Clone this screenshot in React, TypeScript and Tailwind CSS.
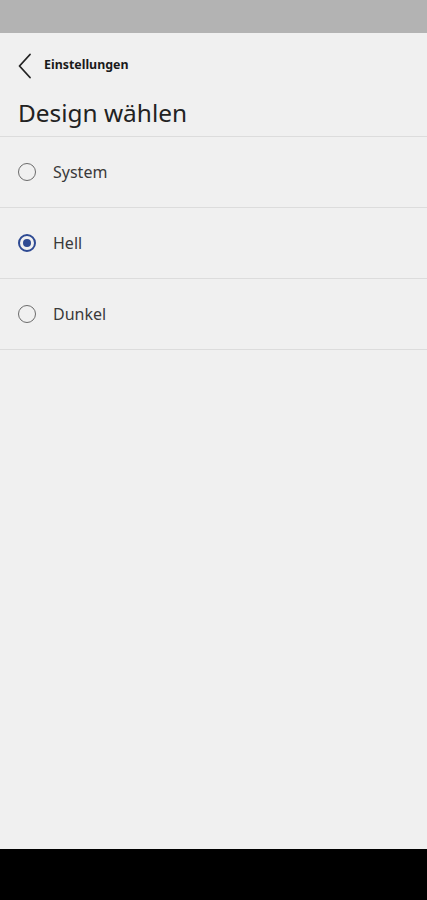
export default function App() {
  const options = [
    { label: "System", selected: false },
    { label: "Hell", selected: true },
    { label: "Dunkel", selected: false },
  ]

  return (
    <div className="flex h-[900px] w-full flex-col bg-[#f0f0f0] font-['Noto_Sans',sans-serif]">
      <div className="h-[33px] shrink-0 bg-[#b3b3b3]" />

      <div className="flex h-[64px] items-center pl-[17px] pt-[1px]">
        <svg width="16" height="26" viewBox="0 0 16 26" fill="none" className="shrink-0">
          <path d="M13 1.5 L2.5 13 L13 24.5" stroke="#222" strokeWidth="1.8" strokeLinecap="round" strokeLinejoin="round" />
        </svg>
        <span className="ml-[11px] text-[12.4px] font-bold text-[#1a1a1a]">Einstellungen</span>
      </div>

      <div className="flex h-[40px] items-start border-b border-[#dcdcdc] pl-[18px]">
        <h1 className="text-[24.4px] leading-[32px] text-[#222]">Design wählen</h1>
      </div>

      <div className="flex flex-col">
        {options.map((option) => (
          <div
            key={option.label}
            className="flex h-[71px] items-center border-b border-[#dcdcdc] pl-[18px]"
          >
            {option.selected ? (
              <div className="flex h-[18px] w-[18px] items-center justify-center rounded-full border-2 border-[#2e4a93]">
                <div className="h-[8px] w-[8px] rounded-full bg-[#2e4a93]" />
              </div>
            ) : (
              <div className="h-[18px] w-[18px] rounded-full border-[1.5px] border-[#6b6b6b]" />
            )}
            <span className="ml-[17px] text-[16px] text-[#3a3a3a]">{option.label}</span>
          </div>
        ))}
      </div>

      <div className="flex-1" />
      <div className="h-[51px] shrink-0 bg-black" />
    </div>
  )
}
